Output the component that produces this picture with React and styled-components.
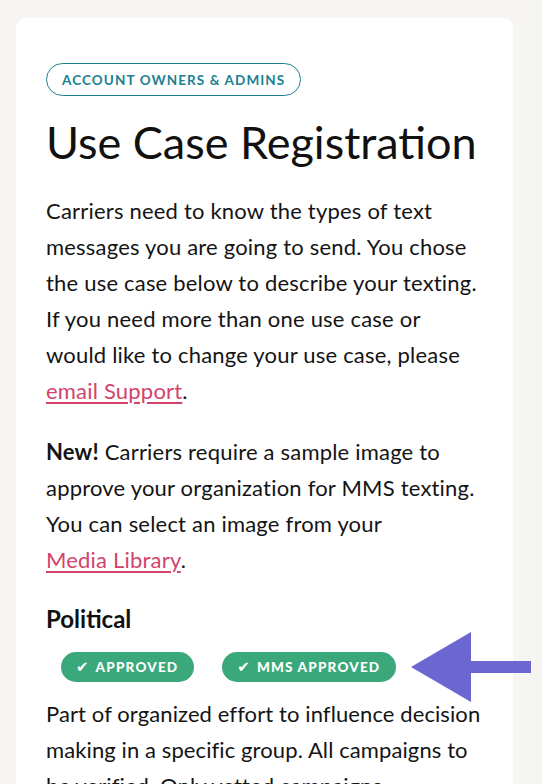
import React from "react";
import styled, { createGlobalStyle } from "styled-components";

const Global = createGlobalStyle`
  html, body { margin: 0; padding: 0; background: #f6f5f1; }
  body { font-family: Lato, "Noto Sans", sans-serif; color: #141414; }
  * { box-sizing: border-box; }
`;

const Page = styled.div`
  position: relative;
  padding: 18px 29px 0 16px;
  height: 784px;
  overflow: hidden;
`;

const Card = styled.section`
  background: #ffffff;
  border-radius: 10px;
  padding: 45px 30px 40px 30px;
  min-height: 900px;
`;

const RoleBadge = styled.span`
  display: inline-flex;
  align-items: center;
  height: 33px;
  padding: 0 15px;
  border: 1.5px solid #1b8190;
  border-radius: 17px;
  color: #1b8190;
  font-size: 13.5px;
  font-weight: 700;
  letter-spacing: 1.1px;
  text-transform: uppercase;
`;

const Title = styled.h1`
  margin: 17px 0 0;
  font-size: 45px;
  font-weight: 400;
  line-height: 58px;
  color: #111;
`;

const Para = styled.p`
  margin: ${(p) => p.$top || "22px"} 0 0;
  font-size: 22px;
  letter-spacing: ${(p) => (p.$tight ? "0.1px" : "0.2px")};
  line-height: 36px;
  color: #141414;
`;

const Link = styled.a`
  color: #d2436b;
  text-decoration: underline;
  text-underline-offset: 3px;
  white-space: nowrap;
`;

const UseCase = styled.h2`
  margin: 25px 0 0;
  font-size: 24px;
  font-weight: 700;
  line-height: 32px;
  color: #111;
`;

const StatusRow = styled.div`
  display: flex;
  gap: 28px;
  margin: 17px 0 0 15px;
`;

const Status = styled.span`
  display: inline-flex;
  align-items: center;
  gap: 7px;
  height: 30px;
  padding: 0 16px 0 15px;
  border-radius: 15px;
  background: #3ba87b;
  color: #fff;
  font-size: 13.5px;
  font-weight: 900;
  letter-spacing: 1.2px;
`;

const Check = styled.span`
  font-family: "DejaVu Sans", sans-serif;
  font-size: 15px;
  letter-spacing: 0;
`;

const Arrow = styled.svg`
  position: absolute;
  left: 411px;
  top: 632px;
`;

export default function App() {
  return (
    <Page>
      <Global />
      <Card>
        <RoleBadge>Account Owners &amp; Admins</RoleBadge>
        <Title>Use Case Registration</Title>
        <Para $top="22px">
          Carriers need to know the types of text messages you are going to
          send. You chose the use case below to describe your texting. If you
          need more than one use case or would like to change your use case,
          please <Link href="#">email Support</Link>.
        </Para>
        <Para $top="25px">
          <strong>New!</strong> Carriers require a sample image to approve your
          organization for MMS texting. You can select an image from your{" "}
          <Link href="#">Media Library</Link>.
        </Para>
        <UseCase>Political</UseCase>
        <StatusRow>
          <Status>
            <Check>✔</Check>APPROVED
          </Status>
          <Status>
            <Check>✔</Check>MMS APPROVED
          </Status>
        </StatusRow>
        <Para $top="14px" $tight>
          Part of organized effort to influence decision making in a specific
          group. All campaigns to be verified. Only vetted campaigns
          registered by political committees will be approved.
        </Para>
      </Card>
      <Arrow width="121" height="70" viewBox="0 0 121 70">
        <polygon points="0,35 60,0 60,29 120,29 120,41 60,41 60,70" fill="#6b66d0" />
      </Arrow>
    </Page>
  );
}
